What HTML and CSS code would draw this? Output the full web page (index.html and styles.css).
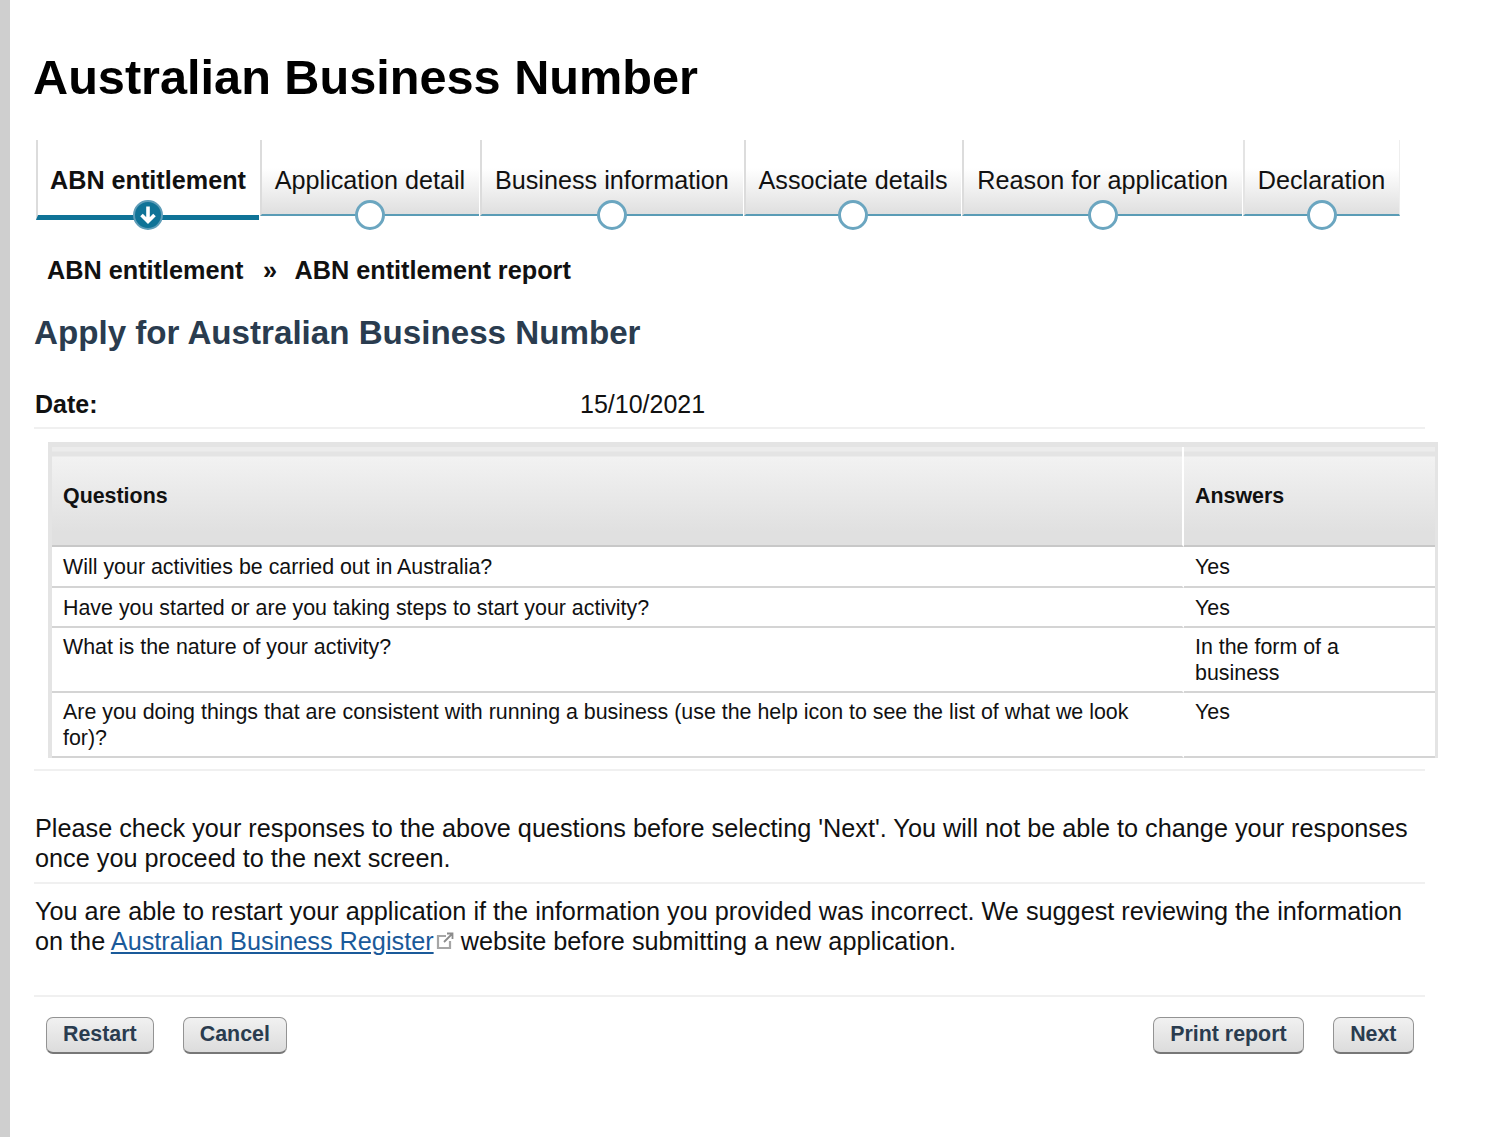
FILE: index.html
```html
<!DOCTYPE html>
<html lang="en">
<head>
<meta charset="utf-8">
<title>Australian Business Number</title>
<link rel="stylesheet" href="styles.css">
</head>
<body>
<main class="page">
  <h1 class="title">Australian Business Number</h1>
  <ol class="steps">
    <li class="step step-active"><span class="step-label">ABN entitlement</span><span class="dot"><svg viewBox="0 0 30 30" width="30" height="30"><circle cx="15" cy="15" r="14" fill="#0f7397" stroke="#5f9db8" stroke-width="2"/><path d="M15 6.500V21M8.500 15l6.500 6.500 6.500-6.500" fill="none" stroke="#fff" stroke-width="3.600"/></svg></span></li>
    <li class="step"><span class="step-label">Application detail</span><span class="dot"></span></li>
    <li class="step"><span class="step-label">Business information</span><span class="dot"></span></li>
    <li class="step"><span class="step-label">Associate details</span><span class="dot"></span></li>
    <li class="step"><span class="step-label">Reason for application</span><span class="dot"></span></li>
    <li class="step step-last"><span class="step-label">Declaration</span><span class="dot"></span></li>
  </ol>
  <nav class="crumbs"><span>ABN entitlement</span><span class="sep">»</span><span>ABN entitlement report</span></nav>
  <h2 class="subtitle">Apply for Australian Business Number</h2>
  <div class="date-row"><strong class="date-label">Date:</strong><span>15/10/2021</span></div>
  <section class="table-wrap">
    <table class="qa">
      <thead>
        <tr><th class="col-q">Questions</th><th class="col-a">Answers</th></tr>
      </thead>
      <tbody>
        <tr class="row-a"><td>Will your activities be carried out in Australia?</td><td>Yes</td></tr>
        <tr class="row-b"><td>Have you started or are you taking steps to start your activity?</td><td>Yes</td></tr>
        <tr class="row-c"><td>What is the nature of your activity?</td><td>In the form of a business</td></tr>
        <tr class="row-c"><td>Are you doing things that are consistent with running a business (use the help icon to see the list of what we look for)?</td><td>Yes</td></tr>
      </tbody>
    </table>
  </section>
  <p class="note note-first">Please check your responses to the above questions before selecting 'Next'. You will not be able to change your responses once you proceed to the next screen.</p>
  <p class="note note-second">You are able to restart your application if the information you provided was incorrect. We suggest reviewing the information on the <a href="#">Australian Business Register</a><svg class="ext" viewBox="0 0 18 18" width="18" height="18"><path d="M10 4H2v12h12V9" fill="none" stroke="#a6a6a6" stroke-width="2.200"/><path d="M8 10l8-8M11 1.500h5.500V7" fill="none" stroke="#8c8c8c" stroke-width="1.800"/></svg> website before submitting a new application.</p>
  <div class="actions">
    <div class="btn-group"><button class="btn btn-restart">Restart</button><button class="btn btn-cancel">Cancel</button></div>
    <div class="btn-group btn-group-right"><button class="btn btn-print">Print report</button><button class="btn btn-next">Next</button></div>
  </div>
</main>
</body>
</html>
```
FILE: styles.css
```css
* { box-sizing: border-box; }
html, body { margin: 0; padding: 0; background: #fff; }
body {
  border-left: 10px solid #cfcfcf;
  min-height: 1137px;
  font-family: "Liberation Sans", Arial, sans-serif;
  color: #111;
}
.page { padding: 0 0 0 24px; width: 1416px; }
.title {
  margin: 0 0 0 -1px;
  padding-top: 49px;
  font-size: 48.650px;
  line-height: 56px;
  font-weight: 700;
  color: #000;
}
.steps {
  list-style: none;
  display: flex;
  margin: 35px 0 0 2px;
  padding: 0;
  height: 112px;
  align-items: flex-start;
}
.step {
  position: relative;
  height: 76px;
  padding: 24px 13.800px 0 13px;
  margin-right: 1px;
  border-left: 2px solid #dcdcdc;
  border-bottom: 2px solid #5a9cb6;
  background: linear-gradient(#fff 0, #fff 28px, #dfdfdf 74px);
  font-size: 25.200px;
  line-height: 32px;
  white-space: nowrap;
}
.step-label { display: block; }
.step-active {
  height: 80px;
  background: #fff;
  border-bottom: 5px solid #0f7397;
  font-weight: 700;
  padding-left: 12px;
  padding-right: 12.800px;
}
.step-last { border-left-color: #e4e4e4; border-right: 1px solid #eee; margin-right: 0; }
.dot {
  position: absolute;
  left: 50%;
  bottom: -16px;
  width: 30px;
  height: 30px;
  margin-left: -15px;
  border: 3px solid #6ba6c0;
  border-radius: 50%;
  background: #fff;
}
.step-active .dot { border: 0; background: none; bottom: -15px; }
.dot svg { display: block; }
.crumbs {
  display: flex;
  gap: 19.500px;
  margin: 0 0 0 13px;
  padding-top: 2px;
  font-size: 25.260px;
  line-height: 32px;
  font-weight: 700;
  color: #111;
}
.sep { margin-right: -2px; }
.subtitle {
  margin: 27px 0 0;
  font-size: 33.150px;
  line-height: 40px;
  font-weight: 700;
  color: #2a3c4f;
}
.date-row {
  display: flex;
  margin-top: 35px;
  padding-bottom: 7px;
  width: 1391px;
  border-bottom: 2px solid #f0f0f0;
  font-size: 25px;
  line-height: 32px;
}
.date-label { width: 546px; padding-left: 1px; }
.table-wrap {
  width: 1391px;
  padding: 13px 0 11px 14px;
  border-bottom: 2px solid #f0f0f0;
}
.qa {
  width: 1390px;
  border-collapse: separate;
  border-spacing: 0;
  table-layout: fixed;
  border: solid #e4e4e4;
  border-width: 5px 3px 0 4px;
  font-size: 21.400px;
  line-height: 26px;
}
.qa th {
  height: 100px;
  padding: 0 11px;
  text-align: left;
  font-weight: 700;
  color: #111;
  border-bottom: 2px solid #c8c8c8;
  background: linear-gradient(#ececec 0, #ececec 4px, #e4e4e4 5px, #e4e4e4 9px, #f2f2f2 10px, #e0e0e0 85px);
}
.col-q { width: 1132px; border-right: 2px solid #fff; }
.qa td {
  padding: 7px 11px 4px;
  vertical-align: top;
  border-bottom: 2px solid #d4d4d4;
}
.row-a td { height: 41px; }
.row-b td { height: 40px; }
.row-c td { padding-top: 6px; padding-bottom: 5px; }
.qa td:first-child { border-right: 2px solid #fff; }
.note {
  margin: 0;
  width: 1391px;
  font-size: 25.260px;
  line-height: 29.500px;
  color: #111;
  padding-left: 1px;
}
.note-first {
  padding-top: 43px;
  padding-bottom: 9px;
  border-bottom: 2px solid #f0f0f0;
}
.note-second {
  padding-top: 13px;
  padding-bottom: 39px;
  border-bottom: 2px solid #f0f0f0;
}
.note a { color: #1a5a9a; }
.ext { vertical-align: 0; margin-left: 2px; }
.actions {
  display: flex;
  justify-content: space-between;
  width: 1380px;
  padding: 20px 0 0 12px;
}
.btn-group { display: flex; gap: 29px; }
.btn {
  height: 37px;
  padding: 0 16px 2px;
  border: 1px solid #939393;
  border-bottom: 2px solid #777;
  border-radius: 7px;
  background: linear-gradient(#f1f1f1, #dcdcdc);
  font-family: "Liberation Sans", Arial, sans-serif;
  font-size: 21.400px;
  font-weight: 700;
  color: #2a3c4f;
}
.btn-next { padding: 0 16.500px 2px; }
```
